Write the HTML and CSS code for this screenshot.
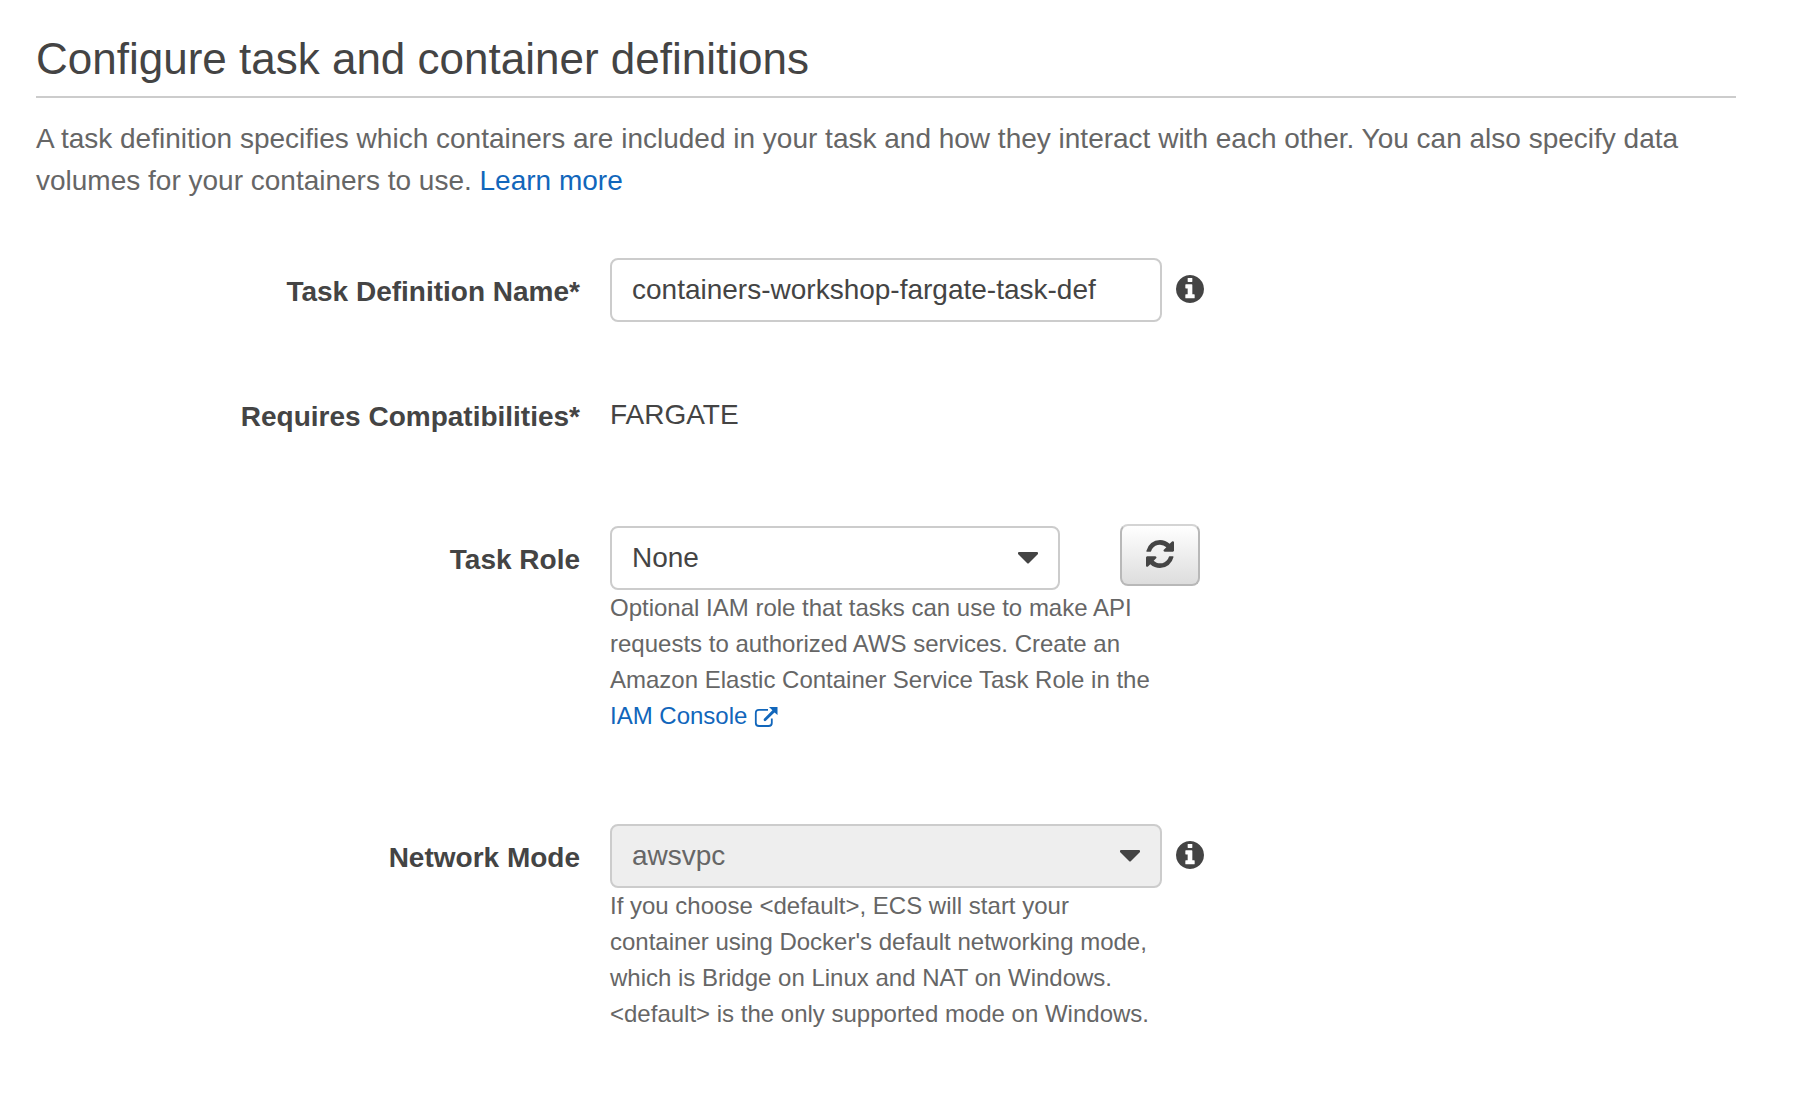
FILE: index.html
```html
<!DOCTYPE html>
<html lang="en">
<head>
<meta charset="utf-8">
<title>Configure task and container definitions</title>
<link rel="stylesheet" href="styles.css">
</head>
<body>
<svg class="sprite" aria-hidden="true">
  <symbol id="icon-info" viewBox="128 128 1536 1536">
    <path d="M1152 1376v-160q0-14-9-23t-23-9h-96v-512q0-14-9-23t-23-9h-320q-14 0-23 9t-9 23v160q0 14 9 23t23 9h96v320h-96q-14 0-23 9t-9 23v160q0 14 9 23t23 9h448q14 0 23-9t9-23zm-128-896v-160q0-14-9-23t-23-9h-192q-14 0-23 9t-9 23v160q0 14 9 23t23 9h192q14 0 23-9t9-23zm640 416q0 209-103 385.5t-279.5 279.5-385.5 103-385.5-103-279.5-279.5-103-385.5 103-385.5 279.5-279.5 385.5-103 385.5 103 279.5 279.5 103 385.5z"/>
  </symbol>
  <symbol id="icon-caret" viewBox="0 0 20 12">
    <path d="M1 0h18q1 0 1 1v1l-9 9q-1 1-2 0L0 2V1q0-1 1-1z"/>
  </symbol>
</svg>
<main class="page">
  <h1 class="title">Configure task and container definitions</h1>
  <p class="intro">A task definition specifies which containers are included in your task and how they interact with each other. You can also specify data volumes for your containers to use. <a href="#">Learn more</a></p>
  <form class="form">
    <div class="row">
      <label class="label" for="task-name">Task Definition Name*</label>
      <div class="field">
        <input class="control" id="task-name" type="text" value="containers-workshop-fargate-task-def">
      </div>
      <button class="info" type="button" aria-label="About task definition name"><svg><use href="#icon-info"/></svg></button>
    </div>
    <div class="row">
      <span class="label label-static">Requires Compatibilities*</span>
      <div class="field field-static">FARGATE</div>
    </div>
    <div class="row">
      <label class="label" for="task-role">Task Role</label>
      <div class="field">
        <div class="inline">
          <div class="select">
            <select class="control" id="task-role"><option>None</option></select>
            <svg class="caret"><use href="#icon-caret"/></svg>
          </div>
          <button class="refresh" type="button" aria-label="Refresh roles">
            <svg viewBox="128 128 1536 1536"><path d="M1639 1056q0 5-1 7-64 268-268 434.5t-478 166.5q-146 0-282.500-55t-243.500-157l-129 129q-19 19-45 19t-45-19-19-45v-448q0-26 19-45t45-19h448q26 0 45 19t19 45-19 45l-137 137q71 66 161 102t187 36q134 0 250-65t186-179q11-17 53-117 8-23 30-23h192q13 0 22.500 9.500t9.500 22.500zm25-800v448q0 26-19 45t-45 19h-448q-26 0-45-19t-19-45 19-45l138-138q-148-137-349-137-134 0-250 65t-186 179q-11 17-53 117-8 23-30 23h-199q-13 0-22.500-9.500t-9.500-22.500v-7q65-268 270-434.500t480-166.500q146 0 284 55.500t245 156.500l130-129q19-19 45-19t45 19 19 45z"/></svg>
          </button>
        </div>
        <p class="help">Optional IAM role that tasks can use to make API requests to authorized AWS services. Create an Amazon Elastic Container Service Task Role in the <a class="external" href="#">IAM Console <svg viewBox="0 0 24 20"><path class="box" d="M14 2.800H5Q1.800 2.800 1.800 6v10Q1.800 19 5 19h9.500q3.300 0 3.300-3v-4.500"/><path d="M15 0h8.500v8l-3-2.600-8.600 8.400q-1 .8-1.900-.1t0-1.900l8.400-8.500z"/></svg></a></p>
      </div>
    </div>
    <div class="row">
      <label class="label" for="network-mode">Network Mode</label>
      <div class="field">
        <div class="select">
          <select class="control" id="network-mode" disabled><option>awsvpc</option></select>
          <svg class="caret"><use href="#icon-caret"/></svg>
        </div>
        <p class="help">If you choose &lt;default&gt;, ECS will start your container using Docker's default networking mode, which is Bridge on Linux and NAT on Windows. &lt;default&gt; is the only supported mode on Windows.</p>
      </div>
      <button class="info" type="button" aria-label="About network mode"><svg><use href="#icon-info"/></svg></button>
    </div>
  </form>
</main>
</body>
</html>
```
FILE: styles.css
```css
* {
  box-sizing: border-box;
}

body {
  margin: 0;
  background: #fff;
  color: #444;
  font: 28px/42px "Liberation Sans", Arial, sans-serif;
}

a {
  color: #1166bb;
  text-decoration: none;
}

.sprite {
  display: none;
}

.page {
  padding: 32px 60px 40px 36px;
}

.title {
  margin: 0;
  padding-bottom: 10px;
  border-bottom: 2px solid #ccc;
  font-size: 44px;
  font-weight: 400;
  line-height: 54px;
}

.intro {
  margin: 20px 0 56px;
  color: #666;
}

.form {
  display: flex;
  flex-direction: column;
  gap: 70px;
}

.row {
  display: grid;
  grid-template-columns: calc(32% + 30px) 552px auto;
  justify-content: start;
  align-items: start;
  min-height: 64px;
}

.label {
  padding: 13px 30px 0 0;
  text-align: right;
  font-weight: 700;
}

.label-static {
  padding-top: 4px;
}

.field {
  min-width: 0;
}

.field-static {
  padding-top: 2px;
}

.control {
  display: block;
  width: 100%;
  height: 64px;
  margin: 0;
  padding: 0 20px;
  border: 2px solid #ccc;
  border-radius: 8px;
  background: #fff;
  color: #444;
  font: inherit;
  appearance: none;
}

.control:disabled {
  background: #eee;
  color: #666;
  opacity: 1;
}

.select {
  position: relative;
  flex: 0 0 450px;
}

.caret {
  position: absolute;
  top: 26px;
  right: 22px;
  width: 20px;
  height: 12px;
  fill: #444;
  pointer-events: none;
}

.inline {
  display: flex;
  gap: 60px;
}

.refresh {
  display: grid;
  place-items: center;
  flex: 0 0 80px;
  height: 62px;
  margin-top: -2px;
  padding: 0 0 2px;
  border: 2px solid #b8b8b8;
  border-top-color: #d4d4d4;
  border-radius: 8px;
  background: linear-gradient(#fff, #ddd);
}

.refresh svg {
  width: 28px;
  height: 28px;
  fill: #444;
}

.help {
  margin: 0 0 20px;
  color: #666;
  font-size: 24px;
  line-height: 36px;
}

.external {
  white-space: nowrap;
}

.external svg {
  width: 24px;
  height: 20px;
  vertical-align: -3px;
  fill: currentColor;
}

.external .box {
  fill: none;
  stroke: currentColor;
  stroke-width: 1.8;
}

.info {
  display: block;
  margin: 17px 0 0 14px;
  padding: 0;
  border: 0;
  background: none;
}

.info svg {
  display: block;
  width: 28px;
  height: 28px;
  fill: #444;
}
```
